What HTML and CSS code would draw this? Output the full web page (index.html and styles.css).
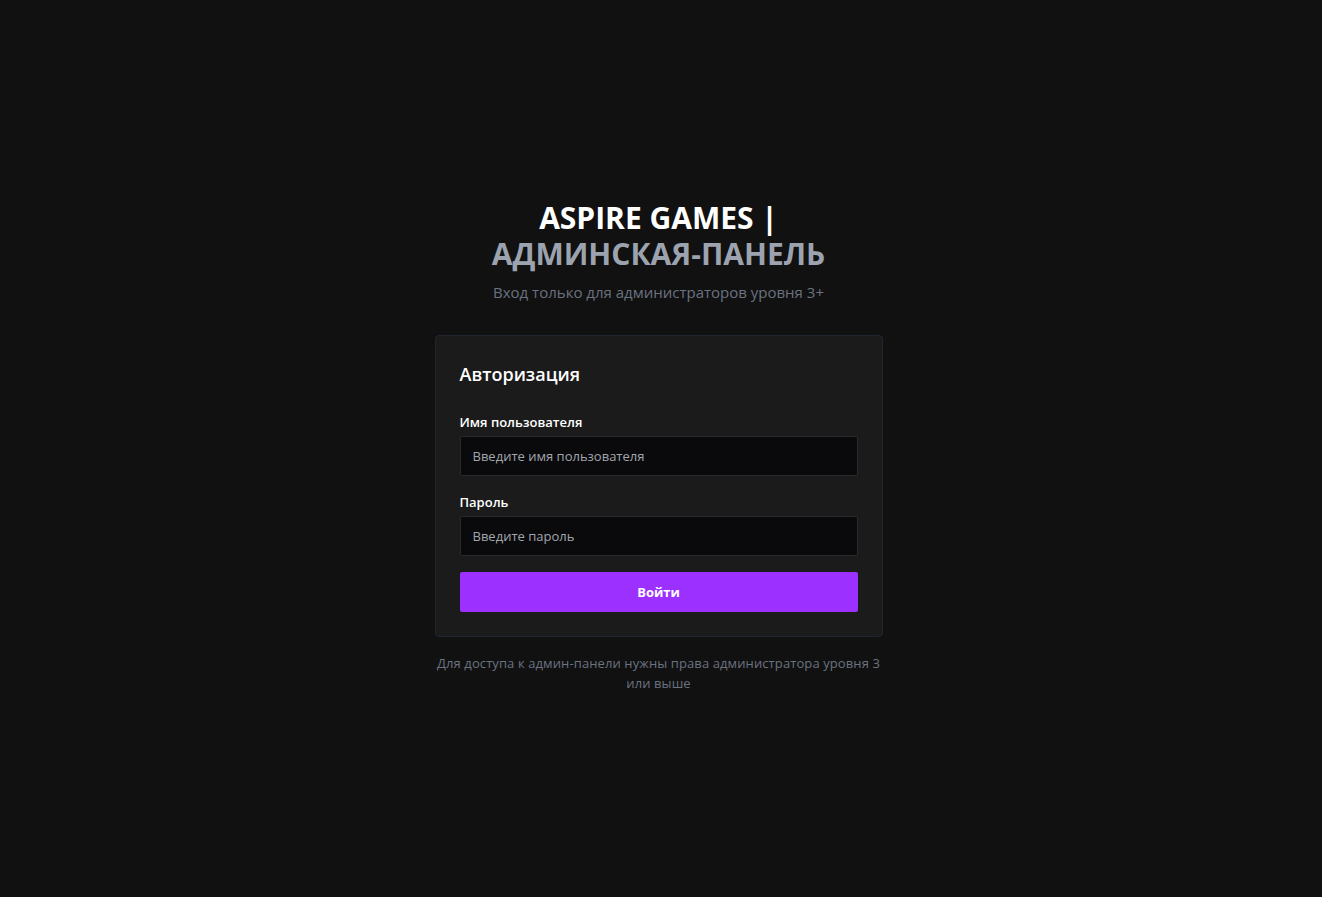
FILE: index.html
```html
<!DOCTYPE html>
<html lang="ru">
<head>
<meta charset="utf-8">
<title>Aspire Games | Админская-панель</title>
<link rel="stylesheet" href="styles.css">
</head>
<body>
<main class="page">
  <div class="wrap">
    <header class="head">
      <h1 class="brand"><span class="brand-main">ASPIRE GAMES |</span><span class="brand-sub">АДМИНСКАЯ-ПАНЕЛЬ</span></h1>
      <p class="lead">Вход только для администраторов уровня 3+</p>
    </header>
    <form class="card">
      <h2 class="card-title">Авторизация</h2>
      <div class="field">
        <label class="label" for="u">Имя пользователя</label>
        <input class="input" id="u" type="text" placeholder="Введите имя пользователя">
      </div>
      <div class="field">
        <label class="label" for="p">Пароль</label>
        <input class="input" id="p" type="password" placeholder="Введите пароль">
      </div>
      <button class="btn" type="button">Войти</button>
    </form>
    <p class="note">Для доступа к админ-панели нужны права администратора уровня 3 или выше</p>
  </div>
</main>
</body>
</html>
```

FILE: styles.css
```css
* { box-sizing: border-box; }
html, body { margin: 0; padding: 0; }
body {
  background: #111111;
  color: #ffffff;
  font-family: "Open Sans", "Noto Sans", sans-serif;
}
.page {
  min-height: 100vh;
  display: flex;
  align-items: center;
  justify-content: center;
  padding-right: 5px;
}
.wrap {
  width: 448px;
}
.head { text-align: center; margin-bottom: 33px; }
.brand {
  margin: 0;
  font-size: 30px;
  line-height: 36px;
  font-weight: 700;
  color: #ffffff;
}
.brand-main, .brand-sub { display: block; }
.brand-sub { color: #9ca3af; }
.lead {
  margin: 10px 0 0;
  font-size: 15px;
  line-height: 20px;
  color: #6b7280;
}
.card {
  background: #1b1b1b;
  border: 1px solid #1f2630;
  border-radius: 4px;
  padding: 24px;
}
.card-title {
  margin: 0 0 24px;
  font-size: 18px;
  line-height: 28px;
  font-weight: 600;
}
.field { margin-bottom: 16px; }
.label {
  display: block;
  font-size: 13px;
  line-height: 20px;
  font-weight: 600;
  margin-bottom: 4px;
  color: #ffffff;
}
.input {
  display: block;
  width: 100%;
  height: 40px;
  padding: 0 12px;
  background: #0a0a0c;
  border: 1px solid #2a2a2c;
  border-radius: 2px;
  color: #ffffff;
  font-family: inherit;
  font-size: 13px;
  outline: none;
}
.input::placeholder { color: #a1a6ae; }
.btn {
  display: block;
  width: 100%;
  height: 40px;
  border: 0;
  border-radius: 2px;
  background: #9b30ff;
  color: #ffffff;
  font-family: inherit;
  font-size: 13px;
  font-weight: 700;
  cursor: pointer;
}
.note {
  margin: 16px 0 5px;
  text-align: center;
  font-size: 13px;
  line-height: 20px;
  letter-spacing: 0.1px;
  color: #6b7280;
}
```
